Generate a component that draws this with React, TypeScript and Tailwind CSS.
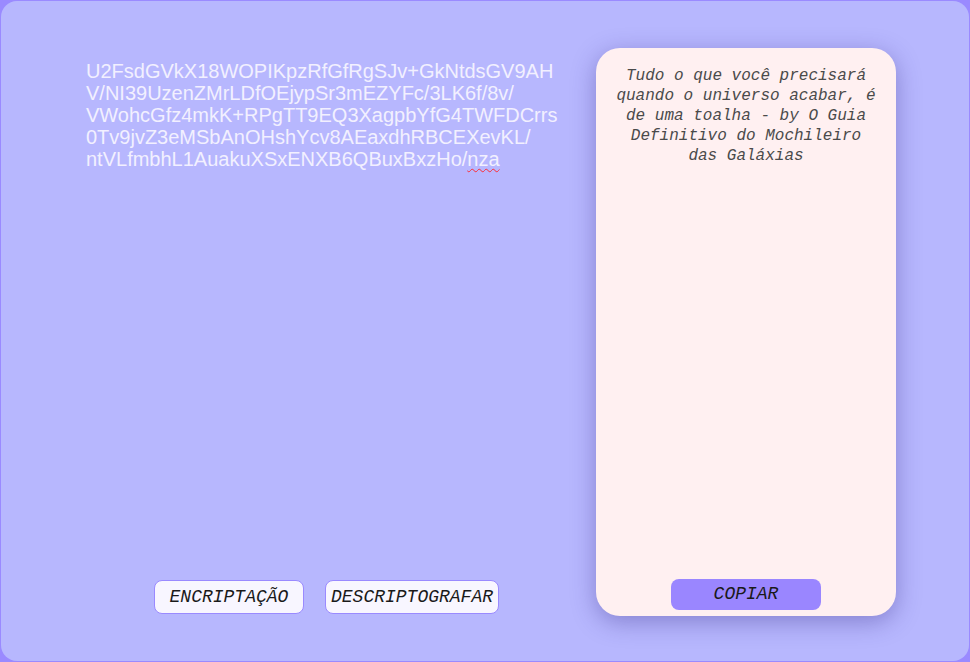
import React from "react";

// lines as they wrap in the original page
const cipherLines = [
  "U2FsdGVkX18WOPIKpzRfGfRgSJv+GkNtdsGV9AH",
  "V/NI39UzenZMrLDfOEjypSr3mEZYFc/3LK6f/8v/",
  "VWohcGfz4mkK+RPgTT9EQ3XagpbYfG4TWFDCrrs",
  "0Tv9jvZ3eMSbAnOHshYcv8AEaxdhRBCEXevKL/",
  "ntVLfmbhL1AuakuXSxENXB6QBuxBxzHo/nza",
];

const mono = { fontFamily: "'Liberation Mono', 'DejaVu Sans Mono', monospace" };

const App: React.FC = () => {
  return (
    <div className="bg-[#9a8aff] min-h-screen p-px">
      <div className="bg-[#b7b7fe] rounded-2xl h-[660px] flex pl-[85px] pt-[47px] gap-[31px]">
        {/* Input side */}
        <div className="w-[479px] h-[566px] flex flex-col">
          <div
            className="mt-[12px] flex-1 text-[20px] leading-[22px] text-[#f2f0ff]"
            style={{ fontFamily: "'Liberation Sans', Arial, sans-serif" }}
          >
            {cipherLines.map((l, i) => (
              <div key={i} className="whitespace-nowrap">
                {i === cipherLines.length - 1 ? (
                  <>
                    {l.slice(0, -3)}
                    <span className="underline decoration-wavy decoration-red-500 decoration-1 underline-offset-2">
                      {l.slice(-3)}
                    </span>
                  </>
                ) : (
                  l
                )}
              </div>
            ))}
          </div>
          <div className="flex justify-center gap-[21px] pl-[2px]">
            <button
              className="w-[150px] h-[34px] rounded-lg border border-[#9a8aff] bg-[#f8f6ff] italic text-[18px] text-[#1a1a1a]"
              style={mono}
            >
              ENCRIPTAÇÃO
            </button>
            <button
              className="px-[5px] h-[34px] rounded-lg border border-[#9a8aff] bg-[#f8f6ff] italic text-[18px] text-[#1a1a1a]"
              style={mono}
            >
              DESCRIPTOGRAFAR
            </button>
          </div>
        </div>

        {/* Output card */}
        <div className="w-[300px] h-[568px] bg-[#fff0f1] rounded-3xl shadow-[0_6px_24px_rgba(40,30,120,0.35)] flex flex-col items-center justify-between px-[20px] pt-[18px] pb-[6px]">
          <p className="italic text-[16px] leading-[20px] text-[#4a4a4a] text-center" style={mono}>
            Tudo o que você precisará quando o universo acabar, é de uma toalha - by O Guia Definitivo do Mochileiro das Galáxias
          </p>
          <button
            className="w-[150px] h-[31px] rounded-lg bg-[#9a86ff] italic text-[18px] text-[#1a1a1a]"
            style={mono}
          >
            COPIAR
          </button>
        </div>
      </div>
    </div>
  );
};

export default App;
